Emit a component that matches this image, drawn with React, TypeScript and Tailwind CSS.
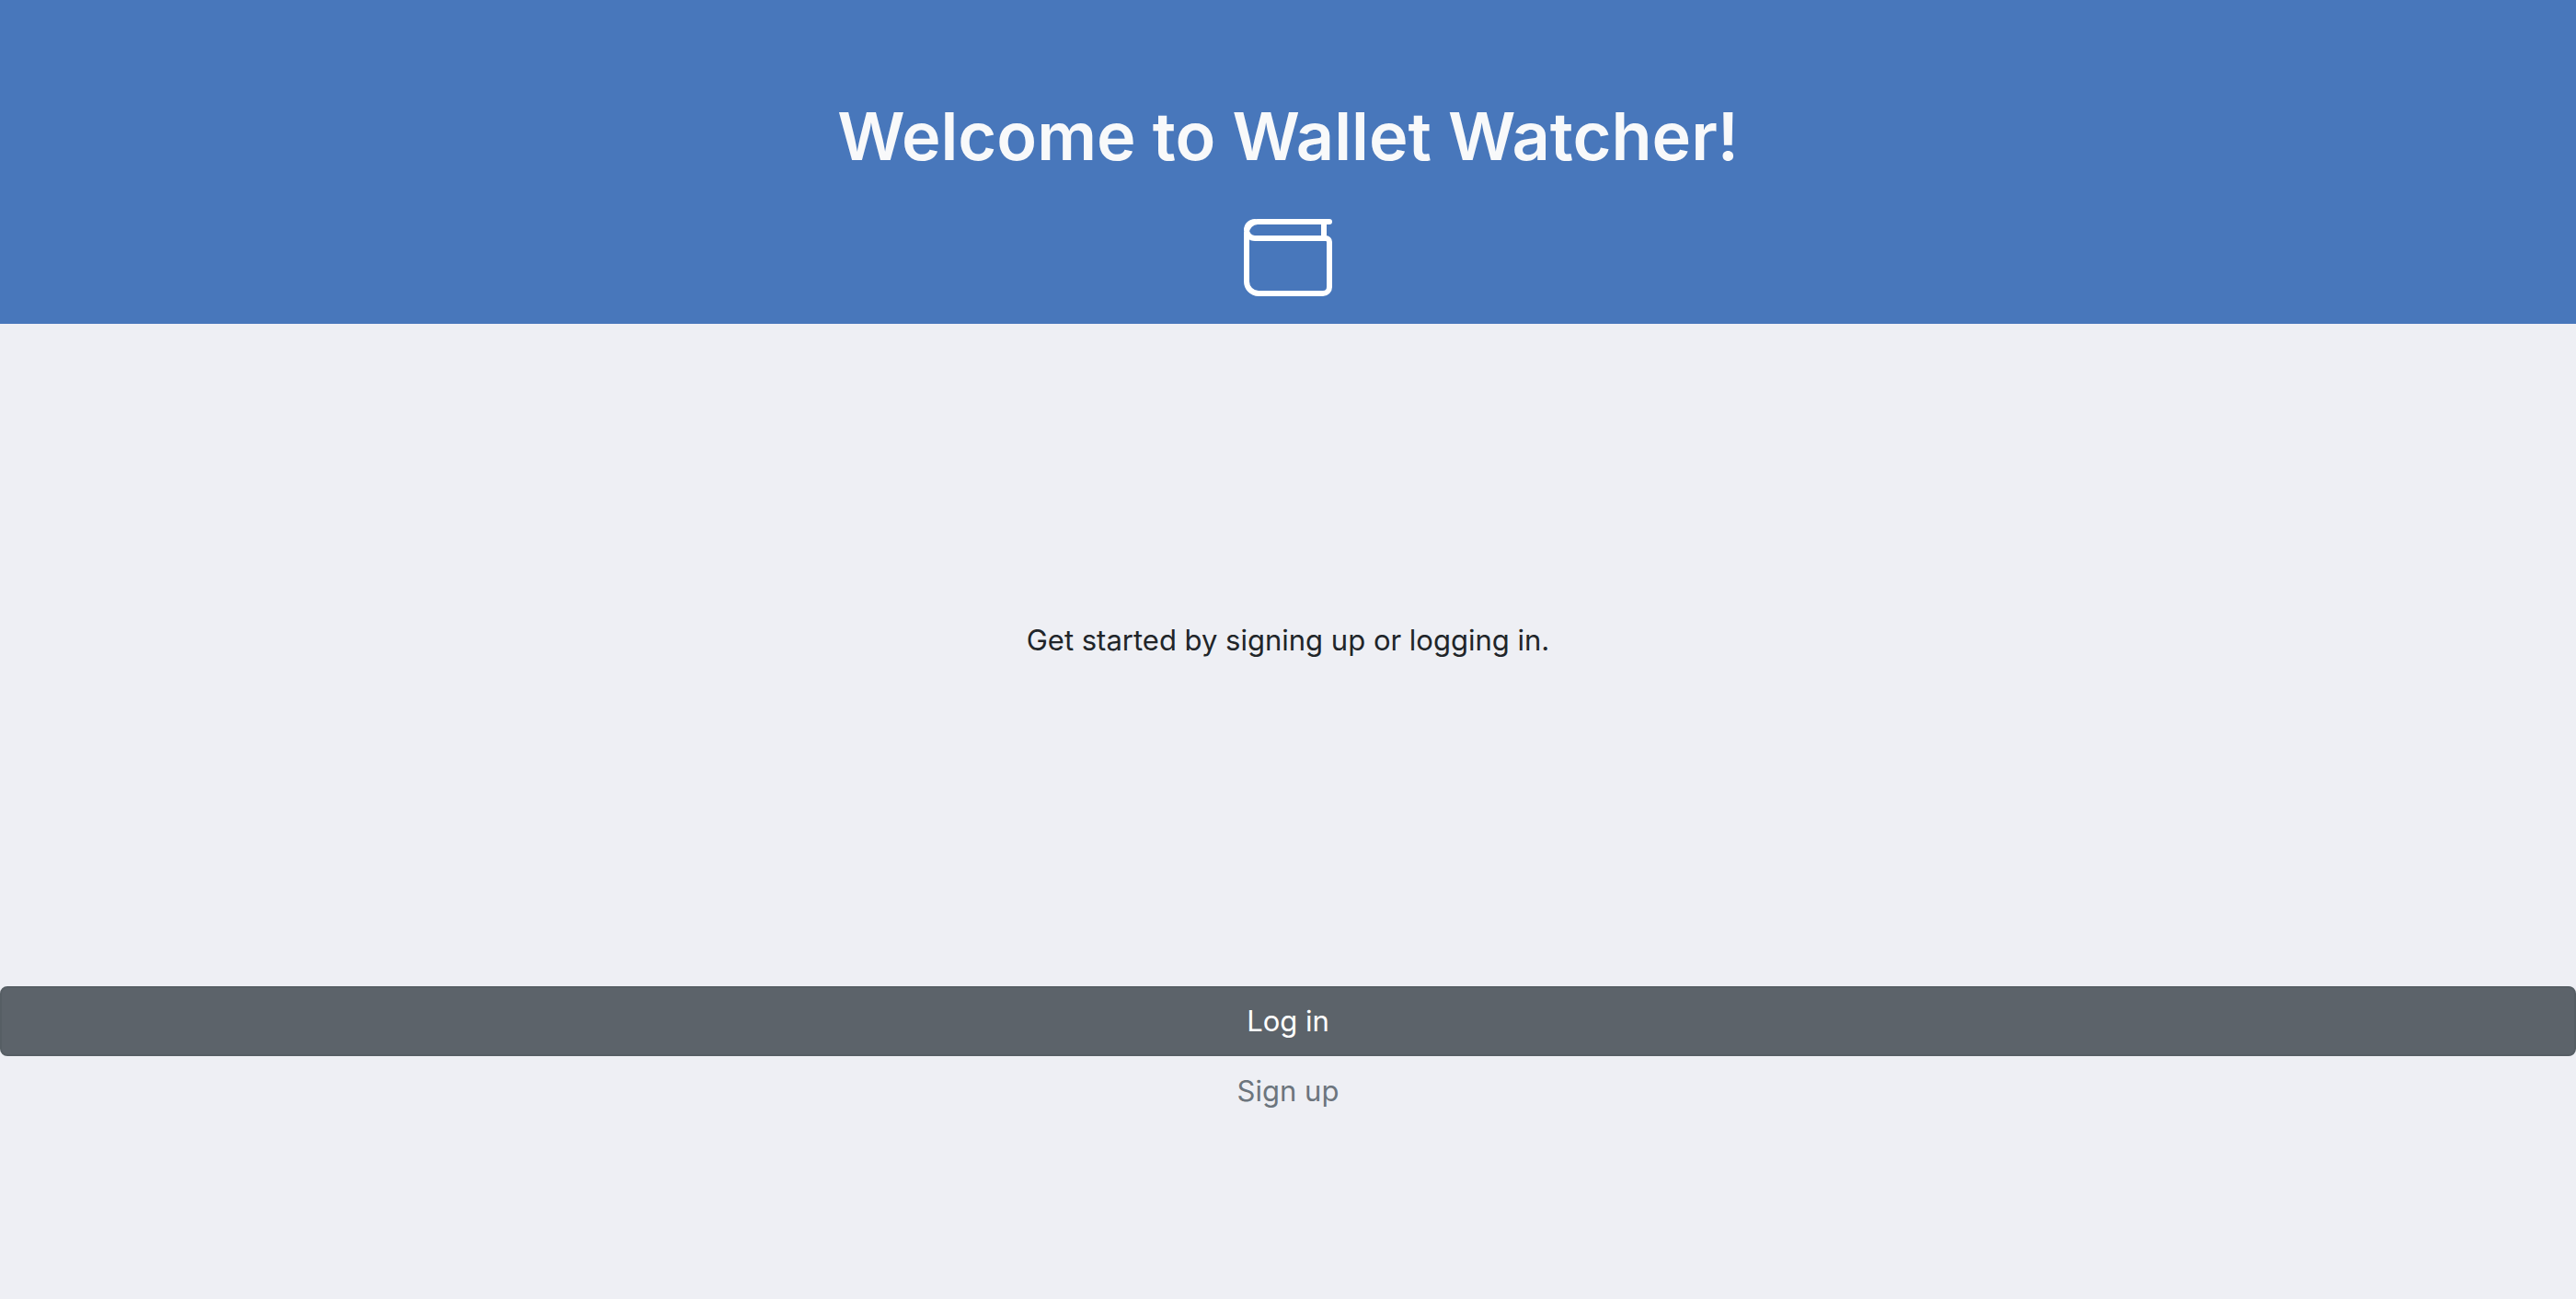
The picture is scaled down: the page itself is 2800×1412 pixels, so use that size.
function WalletIcon() {
  return (
    <svg
      className="h-[84px] w-24"
      viewBox="12 18 96 84"
      fill="none"
      stroke="#ffffff"
      strokeWidth={6}
      strokeLinecap="round"
      aria-hidden="true"
    >
      <path d="M105 21H27a12 12 0 0 0-12 12v53a13 13 0 0 0 13 13h70a7 7 0 0 0 7-7V43a4 4 0 0 0-4-4H24a9 9 0 0 1 0-18" />
      <path d="M99 21v18" />
    </svg>
  );
}

export default function App() {
  return (
    <div className="flex min-h-screen flex-col bg-[#eeeff4] font-['Inter',sans-serif] text-[31px] leading-12 text-[#212529]">
      <header className="flex flex-col items-center gap-[42px] bg-[#4877bb] pt-25 pb-[30px]">
        <h1 className="text-7xl leading-24 font-semibold text-[#f8f9fa]">Welcome to Wallet Watcher!</h1>
        <WalletIcon />
      </header>
      <main className="flex flex-1 flex-col">
        <p className="pt-80 pb-88 text-center">Get started by signing up or logging in.</p>
        <div className="flex flex-col">
          <button type="button" className="rounded-lg border-2 border-[#565e64] bg-[#5c636a] py-3 text-white">
            Log in
          </button>
          <button type="button" className="py-3.5 text-[#6c757d]">
            Sign up
          </button>
        </div>
      </main>
    </div>
  );
}
